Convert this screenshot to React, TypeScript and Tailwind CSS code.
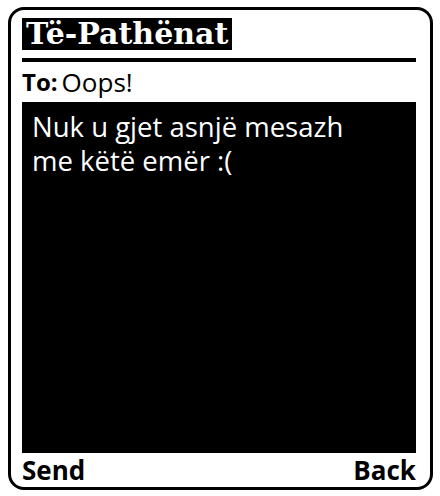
import React from "react";

const sans = "font-['Open_Sans','Liberation_Sans',sans-serif]";

export default function App() {
  return (
    <div className="h-[496px] w-[440px] overflow-hidden bg-white pl-[8px] pt-[7px]">
      <div className="flex h-[483px] w-[425px] flex-col rounded-[16px] border-[3px] border-black pl-[11px] pr-[14px] pt-[8px]">
        {/* header */}
        <div className="flex h-[32px]">
          <div className="flex h-[32px] items-center bg-black px-[4px] font-['DejaVu_Serif',serif] text-[30px] font-bold leading-none text-white">
            Të-Pathënat
          </div>
        </div>
        <div className="mt-[8px] h-[4px] bg-black" />

        {/* recipient */}
        <div className={`flex h-[40px] items-center gap-[4px] text-[26px] leading-none text-black ${sans}`}>
          <span className="text-[24px] font-bold">To:</span>
          <span>Oops!</span>
        </div>

        {/* message */}
        <div className={`h-[351px] bg-black px-[10px] pt-[8px] text-[27.5px] font-medium leading-[34px] text-white ${sans}`}>
          Nuk u gjet asnjë mesazh
          <br />
          me këtë emër :(
        </div>

        {/* soft keys */}
        <div className={`flex flex-1 items-center justify-between text-[26px] font-bold leading-none text-black ${sans}`}>
          <span>Send</span>
          <span>Back</span>
        </div>
      </div>
    </div>
  );
}
